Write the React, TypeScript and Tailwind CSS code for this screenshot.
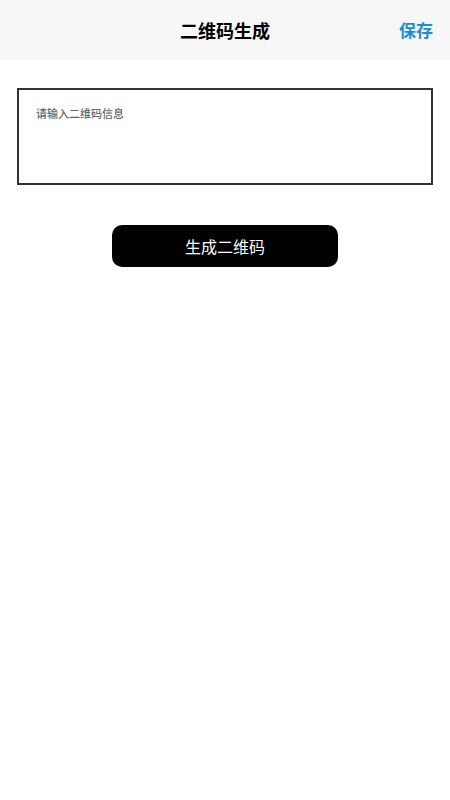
export default function App() {
  return (
    <div
      className="min-h-[800px] w-full bg-white"
      style={{ fontFamily: '"Noto Sans CJK SC", "Noto Sans", sans-serif' }}
    >
      <div className="relative flex h-[60px] items-center justify-center bg-[#f7f7f7]">
        <h1 className="text-[18px] font-bold text-black">二维码生成</h1>
        <button className="absolute right-[17px] top-1/2 -translate-y-1/2 text-[17px] font-bold text-[#1a8fd6]">
          保存
        </button>
      </div>

      <div className="px-[17px] pt-[28px]">
        <textarea
          placeholder="请输入二维码信息"
          className="block h-[97px] w-full resize-none border-2 border-[#333] px-[17px] py-[15px] text-[11px] font-medium text-black outline-none placeholder:text-[#666]"
        />
      </div>

      <div className="flex justify-center pt-[40px]">
        <button className="h-[42px] w-[226px] rounded-[10px] bg-black text-[16px] font-normal text-white">
          生成二维码
        </button>
      </div>
    </div>
  );
}
